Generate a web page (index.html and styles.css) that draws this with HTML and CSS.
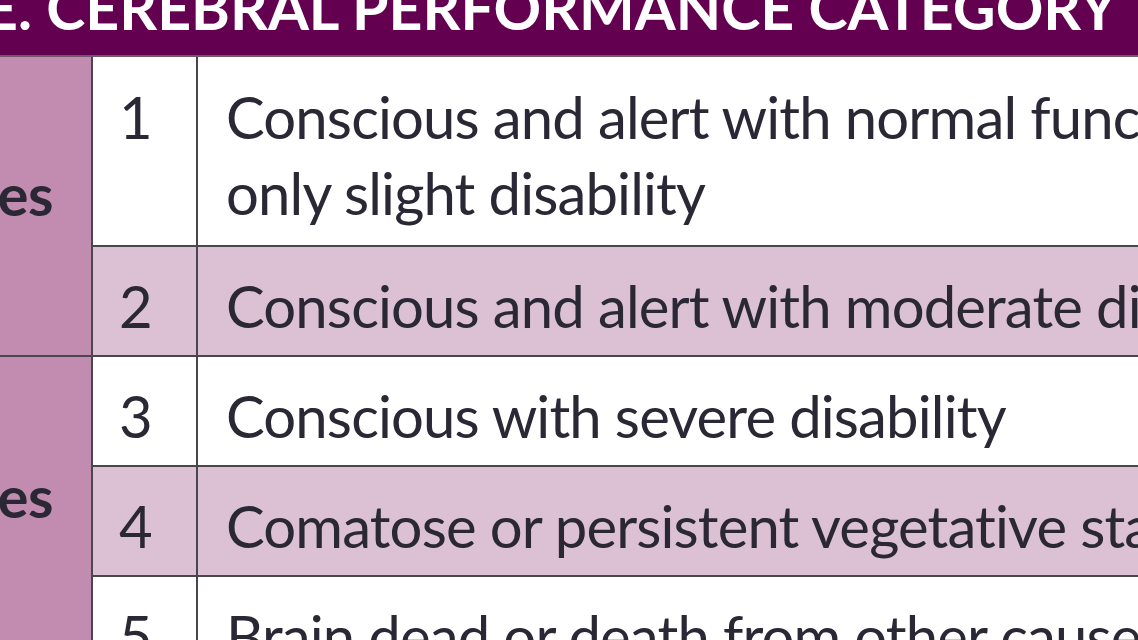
FILE: index.html
```html
<!DOCTYPE html>
<html lang="en">
<head>
<meta charset="utf-8">
<title>Cerebral Performance Category</title>
<link rel="stylesheet" href="styles.css">
</head>
<body>
<div class="page">
  <div class="title-bar">
    <h1 class="title">E. CEREBRAL PERFORMANCE CATEGORY</h1>
  </div>
  <table class="cpc">
    <colgroup>
      <col class="c-group">
      <col class="c-num">
      <col class="c-desc">
    </colgroup>
    <tbody>
      <tr class="row-white row-tall">
        <th class="group group-good" rowspan="2"><div class="group-clip"><span>Good outcomes</span></div></th>
        <td class="num">1</td>
        <td class="desc">Conscious and alert with normal function or<br>only slight disability</td>
      </tr>
      <tr class="row-pink">
        <td class="num">2</td>
        <td class="desc">Conscious and alert with moderate disability</td>
      </tr>
      <tr class="row-white">
        <th class="group group-poor" rowspan="3"><div class="group-clip"><span>Poor outcomes</span></div></th>
        <td class="num">3</td>
        <td class="desc">Conscious with severe disability</td>
      </tr>
      <tr class="row-pink">
        <td class="num">4</td>
        <td class="desc">Comatose or persistent vegetative state</td>
      </tr>
      <tr class="row-white">
        <td class="num">5</td>
        <td class="desc">Brain dead or death from other causes</td>
      </tr>
    </tbody>
  </table>
</div>
</body>
</html>
```

FILE: styles.css
```css
html, body {
  margin: 0;
  padding: 0;
  background: #ffffff;
}

body {
  width: 1138px;
  height: 640px;
  overflow: hidden;
  font-family: Lato, "Open Sans", "Liberation Sans", sans-serif;
  font-variant-ligatures: none;
  color: #2b2836;
}

.page {
  width: 1138px;
}

.title-bar {
  height: 55px;
  background: #640050;
  border-bottom: 2px solid #6f5a69;
  overflow: hidden;
}

.title {
  margin: -22px 0 0 -16px;
  font-size: 59px;
  line-height: 59px;
  font-weight: 700;
  color: #ffffff;
  white-space: nowrap;
  letter-spacing: 0;
}

.cpc {
  border-collapse: collapse;
  table-layout: fixed;
  width: 1400px;
}

.c-group { width: 92px; }
.c-num { width: 105px; }
.c-desc { width: 1203px; }

.cpc td,
.cpc th {
  border: 2px solid #4b464b;
  padding: 0;
}

.cpc tr:first-child td,
.cpc tr:first-child th {
  border-top: none;
}

.group {
  background: #c28cb1;
  border-left: none !important;
  vertical-align: middle;
  font-weight: 700;
}

.group-clip {
  display: flex;
  justify-content: flex-end;
  overflow: hidden;
  padding-right: 38px;
  font-size: 58px;
  line-height: 60px;
  white-space: nowrap;
  letter-spacing: -0.5px;
}

.group-good .group-clip { padding-bottom: 24px; }
.group-poor .group-clip { padding-bottom: 50px; }

.row-white td { background: #ffffff; }
.row-pink td { background: #dcc1d5; }

.num {
  font-size: 58px;
  line-height: 76px;
  padding: 21px 0 11px 26px !important;
  vertical-align: top;
}

.desc {
  font-size: 58px;
  line-height: 76px;
  letter-spacing: -0.85px;
  padding: 21px 0 11px 28px !important;
  white-space: nowrap;
  vertical-align: top;
}

.row-tall .num,
.row-tall .desc {
  padding-top: 22px !important;
  padding-bottom: 14px !important;
}
```
